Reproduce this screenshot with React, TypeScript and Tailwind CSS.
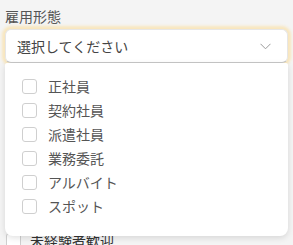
import React from 'react';

const options = ['正社員', '契約社員', '派遣社員', '業務委託', 'アルバイト', 'スポット'];

const Box = ({ className = '' }: { className?: string }) => (
  <span className={`block w-[15px] h-[15px] shrink-0 rounded-[3px] border border-[#cfcfcf] bg-white ${className}`} />
);

export default function App() {
  return (
    <div
      className="h-[245px] overflow-hidden bg-[#f4f4f4] px-[5px] pt-[6px] text-[#555]"
      style={{ fontFamily: '"Noto Sans CJK JP", "Noto Sans", sans-serif' }}
    >
      <div className="text-[14px] leading-[20px] mb-[3px]">雇用形態</div>

      <div className="relative z-10">
        {/* Select */}
        <div className="flex h-[34px] items-center justify-between rounded-[6px] border border-[#e6e6e6] border-b-[#c8c8c8] bg-white pl-[11px] pr-[16px] shadow-[0_0_3px_3px_#f8e6bd]">
          <span className="text-[14px] text-[#444]">選択してください</span>
          <svg width="11" height="7" viewBox="0 0 11 7" fill="none">
            <path d="M0.5 0.8 L5.5 5.8 L10.5 0.8" stroke="#9a9a9a" strokeWidth="1" />
          </svg>
        </div>

        {/* Dropdown */}
        <div className="absolute left-0 right-0 top-full rounded-b-[8px] rounded-t-[2px] bg-white pl-[17px] pt-[11px] pb-[18px] shadow-[0_2px_6px_rgba(0,0,0,0.12)]">
          {options.map((o) => (
            <div key={o} className="flex h-[24px] items-center gap-[11px]">
              <Box />
              <span className="text-[14px] leading-none text-[#555]">{o}</span>
            </div>
          ))}
        </div>
      </div>

      {/* Content behind */}
      <div className="mt-[167px] flex items-center gap-[9px] pl-[1px]">
        <Box />
        <span className="text-[14px] text-[#333]">未経験者歓迎</span>
      </div>
    </div>
  );
}
